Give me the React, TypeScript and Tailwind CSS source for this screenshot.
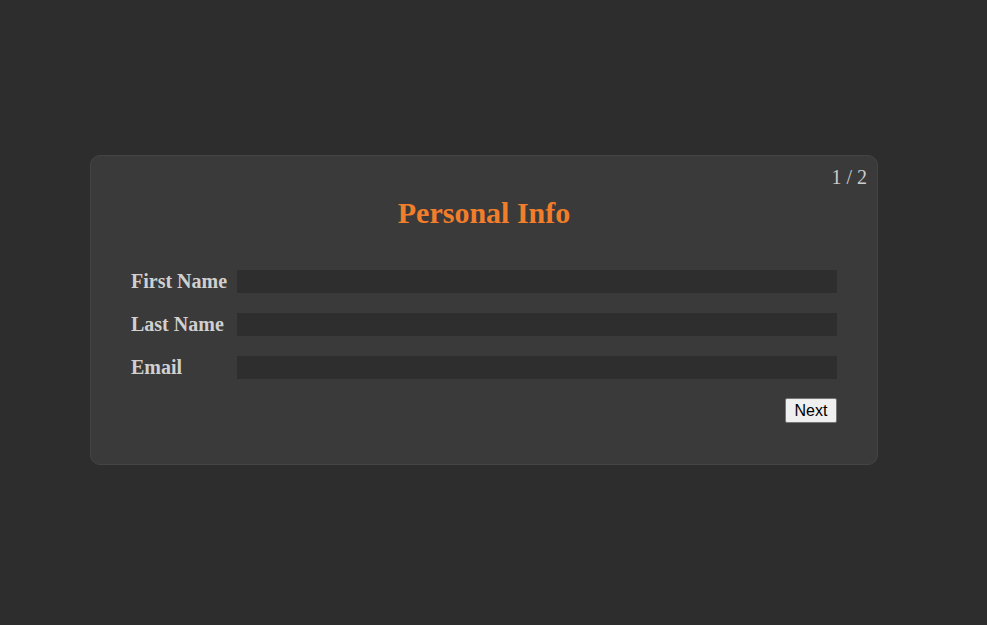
export default function App() {
  const fields = ["First Name", "Last Name", "Email"];

  return (
    <div className="min-h-[625px] w-full bg-[#2d2d2d] pt-[155px] pl-[90px] font-['Liberation_Serif',serif]">
      {/* wizard card */}
      <div className="relative w-[788px] rounded-[10px] border border-[#444444] bg-[#3a3a3a] px-10 pt-10 pb-[41px]">
        <div className="absolute top-[10px] right-[10px] text-[20px] leading-[23px] text-[#cccccc]">
          1 / 2
        </div>

        <h2 className="text-center text-[30px] leading-[34px] font-bold text-[#f27d2a]">
          Personal Info
        </h2>

        <form className="mt-10 flex flex-col gap-5" onSubmit={(e) => e.preventDefault()}>
          {fields.map((label) => (
            <div key={label} className="flex items-center">
              <label className="w-[106px] text-[20px] leading-[23px] font-bold text-[#d0d0d0]">
                {label}
              </label>
              <input
                type="text"
                className="h-[23px] flex-1 bg-[#2e2e2e] px-1 text-[#dddddd] outline-none"
              />
            </div>
          ))}

          <div className="-mt-px flex justify-end">
            <button
              type="submit"
              className="h-[25px] w-[52px] rounded-[2px] border border-[#767676] bg-[#efefef] font-['Liberation_Sans',sans-serif] text-[16px] leading-[23px] text-black"
            >
              Next
            </button>
          </div>
        </form>
      </div>
    </div>
  );
}
